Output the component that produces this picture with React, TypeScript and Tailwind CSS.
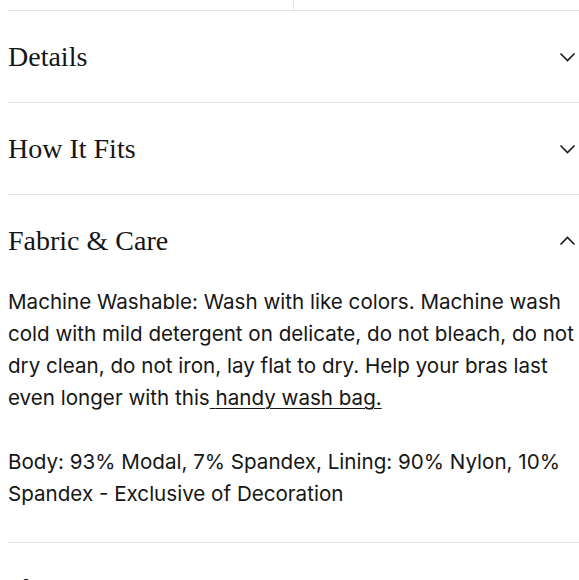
import { useState } from "react";

type Section = {
  id: string;
  title: string;
};

const sections: Section[] = [
  { id: "details", title: "Details" },
  { id: "fit", title: "How It Fits" },
  { id: "care", title: "Fabric & Care" },
  { id: "shipping", title: "Shipping & Returns" },
];

function Chevron({ open }: { open: boolean }) {
  return (
    <svg
      width="17"
      height="10"
      viewBox="0 0 17 10"
      fill="none"
      stroke="#1a1a1a"
      strokeWidth="1.6"
      className={open ? "rotate-180" : ""}
    >
      <polyline points="1.5,1.5 8.5,8.5 15.5,1.5" />
    </svg>
  );
}

function CareContent() {
  return (
    <div className="pb-8 font-['Inter',sans-serif] text-[20.6px] leading-[32px] text-[#161616]">
      <p>
        Machine Washable: Wash with like colors. Machine wash cold with mild
        detergent on delicate, do not bleach, do not dry clean, do not iron,
        lay flat to dry. Help your bras last even longer with this
        <a href="#" className="underline decoration-1 underline-offset-[3px]">
          {" "}
          handy wash bag.
        </a>
      </p>
      <p className="mt-8">
        Body: 93% Modal, 7% Spandex, Lining: 90% Nylon, 10% Spandex - Exclusive
        of Decoration
      </p>
    </div>
  );
}

export default function App() {
  const [openId, setOpenId] = useState<string | null>("care");

  return (
    <main className="min-h-screen overflow-hidden bg-white pl-2">
      {/* tail of the option buttons above */}
      <div className="grid h-[11px] grid-cols-2 border-b border-[#e4e4e4]">
        <div className="border-r border-[#e4e4e4]" />
        <div />
      </div>

      {sections.map((section) => {
        const open = openId === section.id;
        return (
          <div key={section.id} className="border-b border-[#e4e4e4]">
            <button
              onClick={() => setOpenId(open ? null : section.id)}
              className="flex h-[91px] w-full items-center justify-between pr-[3px] text-left"
            >
              <span className="font-['Liberation_Serif',serif] text-[28px] text-[#151515]">
                {section.title}
              </span>
              <Chevron open={open} />
            </button>
            {open && section.id === "care" && <CareContent />}
          </div>
        );
      })}
    </main>
  );
}
